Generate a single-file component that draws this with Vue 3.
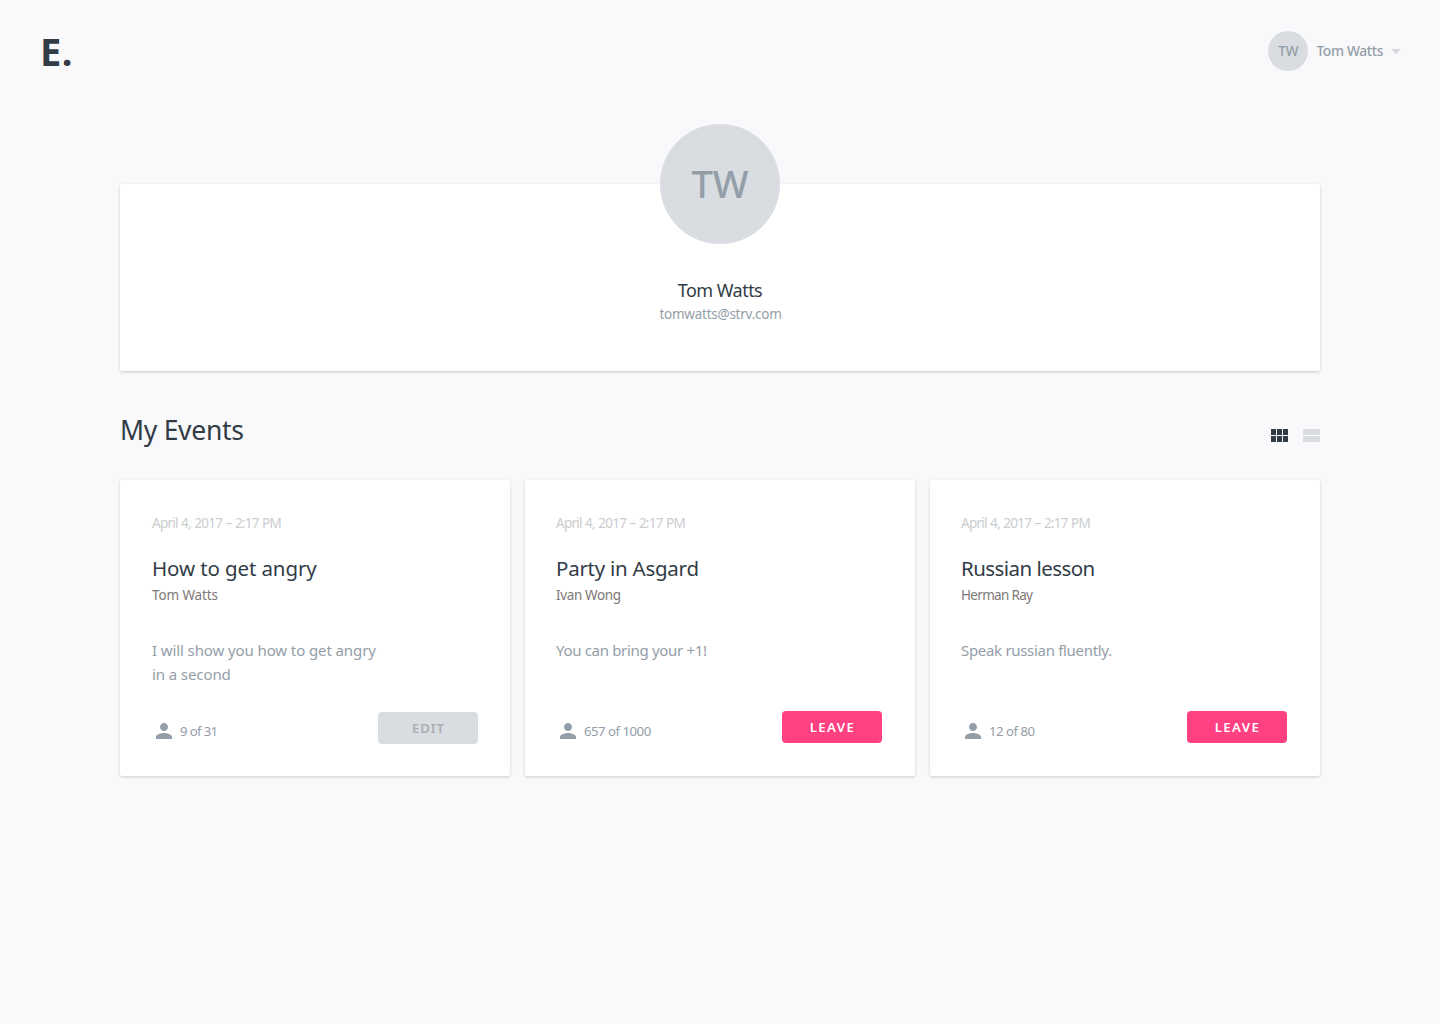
<script setup>
const events = [
  { date: 'April 4, 2017 – 2:17 PM', title: 'How to get angry', author: 'Tom Watts', lines: ['I will show you how to get angry', 'in a second'], count: '9 of 31', action: 'Edit', track: [-0.11, -0.12, -0.1, -0.65] },
  { date: 'April 4, 2017 – 2:17 PM', title: 'Party in Asgard', author: 'Ivan Wong', lines: ['You can bring your +1!'], count: '657 of 1000', action: 'Leave', track: [-0.25, -0.36, -0.32, -0.5] },
  { date: 'April 4, 2017 – 2:17 PM', title: 'Russian lesson', author: 'Herman Ray', lines: ['Speak russian fluently.'], count: '12 of 80', action: 'Leave', track: [-0.55, -0.68, -0.31, -0.5] },
]
const spacing = (value) => ({ letterSpacing: value + 'px' })
</script>

<template>
  <div class="page">
    <header class="header">
      <div class="logo">E.</div>
      <div class="user">
        <div class="avatar small">TW</div>
        <span class="user-name">Tom Watts</span>
        <svg class="caret" width="10" height="5" viewBox="0 0 10 5"><path d="M.5 0h9L5 5z" /></svg>
      </div>
    </header>

    <main class="content">
      <section class="profile">
        <div class="avatar large">TW</div>
        <h1 class="name">Tom Watts</h1>
        <p class="email">tomwatts@strv.com</p>
      </section>

      <div class="toolbar">
        <h2 class="heading">My Events</h2>
        <div class="views">
          <svg width="17" height="13" viewBox="0 0 17 13" fill="#323c46"><path d="M0 0h5v6H0zM6 0h5v6H6zM12 0h5v6h-5zM0 7h5v6H0zM6 7h5v6H6zM12 7h5v6h-5z" /></svg>
          <svg width="17" height="13" viewBox="0 0 17 13" fill="#d9dce1"><path d="M0 0h17v6H0zM0 7h17v6H0z" /></svg>
        </div>
      </div>

      <section class="cards">
        <article v-for="event in events" :key="event.title" class="card" :class="{ own: event.action === 'Edit' }">
          <time class="date">{{ event.date }}</time>
          <h3 class="title" :style="spacing(event.track[0])">{{ event.title }}</h3>
          <p class="author" :style="spacing(event.track[1])">{{ event.author }}</p>
          <p class="description" :style="spacing(event.track[2])">
            <span v-for="line in event.lines" :key="line">{{ line }}</span>
          </p>
          <footer class="footer">
            <svg class="person" width="24" height="24" viewBox="0 0 24 24"><path d="M12 12c2.21 0 4-1.79 4-4s-1.79-4-4-4-4 1.79-4 4 1.79 4 4 4zm0 2c-2.67 0-8 1.34-8 4v2h16v-2c0-2.66-5.33-4-8-4z" /></svg>
            <span class="count" :style="spacing(event.track[3])">{{ event.count }}</span>
            <button class="button" :class="event.action.toLowerCase()">{{ event.action.toUpperCase() }}</button>
          </footer>
        </article>
      </section>
    </main>
  </div>
</template>

<style>
body {
  background: #f9f9fb;
}
</style>

<style scoped>
.page {
  box-sizing: border-box;
  min-height: 1024px;
  background: #f9f9fb;
  color: #323c46;
  font-family: "Noto Sans", "Open Sans", sans-serif;
  white-space: nowrap;
}
h1, h2, h3, p {
  margin: 0;
  font-weight: 400;
}
svg {
  display: block;
}
.header {
  display: flex;
  justify-content: space-between;
  align-items: flex-start;
  height: 153px;
  padding: 31px 39px 0 40px;
}
.logo {
  height: 40px;
  font-size: 38px;
  line-height: 40px;
  font-weight: 700;
  letter-spacing: 0.5px;
}
.user {
  display: flex;
  align-items: center;
}
.avatar {
  display: flex;
  align-items: center;
  justify-content: center;
  border-radius: 50%;
  background: #d9dce1;
  color: #949ea8;
  font-weight: 500;
}
.small {
  width: 40px;
  height: 40px;
  font-size: 13.5px;
  line-height: 40px;
}
.user-name {
  margin: 0 8px 0 8px;
  font-size: 13.8px;
  line-height: 24px;
  font-weight: 500;
  letter-spacing: -0.35px;
  color: #949ea8;
}
.caret {
  fill: #d3d7dc;
}
.content {
  width: 1200px;
  margin: 0 auto;
}
.profile {
  display: flex;
  flex-direction: column;
  align-items: center;
  height: 187px;
  border-radius: 2px;
  background: #fff;
  box-shadow: 0 1px 3px rgba(0, 0, 0, 0.2);
}
.large {
  flex: none;
  box-sizing: border-box;
  width: 120px;
  height: 120px;
  margin-top: -60px;
  padding-bottom: 2px;
  font-size: 38px;
  line-height: 118px;
}
.name {
  margin-top: 34px;
  font-size: 18px;
  line-height: 24px;
  letter-spacing: -0.54px;
}
.email {
  font-size: 13.5px;
  line-height: 24px;
  letter-spacing: -0.25px;
  padding-left: 1px;
  color: #949ea8;
}
.toolbar {
  display: flex;
  justify-content: space-between;
  height: 109px;
}
.heading {
  margin: 39px 0 0;
  font-size: 26.5px;
  line-height: 40px;
  letter-spacing: -0.27px;
}
.views {
  display: flex;
  gap: 15px;
  margin-top: 58px;
}
.cards {
  display: grid;
  grid-template-columns: repeat(3, 390px);
  gap: 15px;
}
.card {
  display: flex;
  flex-direction: column;
  box-sizing: border-box;
  height: 296px;
  padding: 31px 33px 32px 31px;
  border-radius: 2px;
  background: #fff;
  box-shadow: 0 1px 3px rgba(0, 0, 0, 0.18);
}
.card.own {
  padding: 31px 32px 32px 32px;
}
.date {
  font-size: 13.5px;
  line-height: 24px;
  letter-spacing: -0.75px;
  word-spacing: 0.6px;
  color: #cacdd0;
}
.title {
  margin: 19px 0 0;
  font-size: 20.5px;
  line-height: 28px;
}
.author {
  margin-top: 1px;
  font-size: 13.5px;
  line-height: 24px;
  color: #7d7878;
}
.description {
  display: flex;
  flex-direction: column;
  margin-top: 31px;
  font-size: 15px;
  line-height: 24px;
  color: #949ea8;
}
.footer {
  display: flex;
  align-items: flex-start;
  margin-top: auto;
  height: 33px;
}
.own .footer {
  height: 32px;
}
.person {
  margin-top: 8px;
  fill: #949ea8;
}
.count {
  margin: 8px auto 0 4px;
  font-size: 13.2px;
  line-height: 24px;
  color: #949ea8;
}
.own .person,
.own .count {
  margin-top: 7px;
}
.button {
  width: 100px;
  height: 32px;
  padding: 0 0 0 1px;
  border: 0;
  border-radius: 4px;
  font-family: inherit;
  font-size: 13.2px;
  line-height: 32px;
  font-weight: 600;
}
.edit {
  background: #d9dce1;
  color: #a9aeb4;
  letter-spacing: 0.9px;
}
.leave {
  background: #ff4081;
  color: #fff;
  letter-spacing: 1.4px;
}
</style>
